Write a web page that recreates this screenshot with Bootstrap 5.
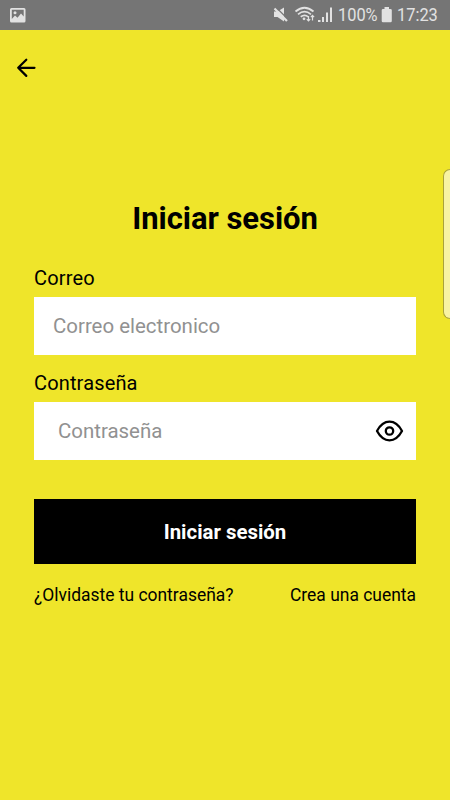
<!DOCTYPE html>
<html lang="es">
<head>
<meta charset="utf-8">
<meta name="viewport" content="width=device-width, initial-scale=1">
<title>Iniciar sesión</title>
<link href="https://cdn.jsdelivr.net/npm/bootstrap@5.3.0/dist/css/bootstrap.min.css" rel="stylesheet">
<style>
body{font-family:Roboto,"Liberation Sans",sans-serif;background:#efe52a;color:#000;height:800px;line-height:1}
svg{display:block;flex:none}
.status{height:30px;background:#757575;color:#e2e2e2;padding:0 12px 0 10px}
.status-text{font-size:18px;display:block;line-height:30px;white-space:nowrap;transform:scaleX(.91);transform-origin:left}
.slot-pct{width:39px;margin-left:5px}
.slot-time{width:41px;margin-left:4px}
.topbar{padding:25px 14px 0;height:76px}
.form-area{padding:0 34px}
.title{font-size:31px;font-weight:700;line-height:36px;margin:95px 0 29px;letter-spacing:-.05px}
.field-label{font-size:20px;line-height:24px;margin:0 0 7px;letter-spacing:.15px}
.field{height:58px;border:0;border-radius:0;background:#fff;font-size:20.45px;padding:0 19px;color:#000}
.field::placeholder{color:#919191;opacity:1}
.field-email{margin-bottom:16px}
.field-pass{padding-left:24px}
.eye{right:11px;top:14px}
.submit{height:65px;border-radius:0;font-size:20.4px;font-weight:700;margin-top:39px;background:#000;padding:2px 0 0}
.links{font-size:17.45px;line-height:22px;margin-top:20px}
.edge{right:0;top:169px;width:7px;height:150px;background:#f8f3a2;border:1px solid #aaa33c;border-right:0;border-radius:7px 0 0 7px}
</style>
<script src="https://cdn.jsdelivr.net/npm/bootstrap@5.3.0/dist/js/bootstrap.bundle.min.js"></script>
</head>
<body class="position-relative overflow-hidden">
<header class="status d-flex align-items-center">
  <svg width="16" height="15" viewBox="0 0 16 15"><path fill="#e2e2e2" fill-rule="evenodd" d="M1.5 0h12.500Q15.500 0 15.500 1.500v11.500Q15.500 14.500 14 14.500H1.500Q0 14.500 0 13V1.500Q0 0 1.500 0zM1.800 1.800v9.200l3.200-3.500 2.500 2.300 3.500-4.300 2.700 3V1.800z"/><circle cx="5" cy="4.700" r="1.500" fill="#e2e2e2"/></svg>
  <div class="d-flex align-items-center ms-auto">
    <svg width="60" height="20" viewBox="273 5 60 20" fill="none" stroke="#e2e2e2">
      <path fill="#e2e2e2" stroke="none" d="M274 11.500h3.500l6.500-4v14l-6.500-4.500h-3.500z"/>
      <path stroke="#757575" stroke-width="1.200" d="M276.200 7.500l12 12"/>
      <path stroke-width="2.200" d="M274.500 8.500l12.500 12.500"/>
      <path stroke-width="1.700" d="M295.500 11.500q9-7.500 18 0M298 14.300q6.500-5.300 13 0M300.700 16.800q4-3 7.500 0"/>
      <circle cx="304" cy="18.800" r="1.400" fill="#e2e2e2" stroke="none"/>
      <path stroke-width="1.200" d="M308.500 16v5M306.800 19.200l1.700 1.800 1.700-1.800M312.500 20.500v-5M310.900 17.200l1.600-1.800 1.600 1.800"/>
      <path fill="#e2e2e2" stroke="none" d="M318 22v-2h2.500v2zM322 22v-5h2v5zM326 22v-9.500h2V22zM330 22V7.500h2V22z"/>
    </svg>
    <div class="slot-pct"><span class="status-text">100%</span></div>
    <svg class="ms-1" width="12" height="16" viewBox="0 0 12 16"><path fill="#e2e2e2" d="M3.500 0h4.500v2h1.500q1.300 0 1.300 1.300V14q0 1.300-1.300 1.300H2Q.700 15.300.700 14V3.300Q.700 2 2 2h1.500z"/></svg>
    <div class="slot-time"><span class="status-text">17:23</span></div>
  </div>
</header>
<nav class="topbar">
  <a href="#" class="d-inline-block" aria-label="Volver"><svg width="24" height="24" viewBox="0 0 24 24" fill="none" stroke="#000" stroke-width="2.200" stroke-linecap="round" stroke-linejoin="round"><path d="M20.500 12.800H4.200M12.300 4.700l-8.100 8.100 8.100 8.100"/></svg></a>
</nav>
<main class="form-area">
  <h1 class="title text-center">Iniciar sesión</h1>
  <form>
    <label class="field-label d-block" for="correo">Correo</label>
    <input id="correo" type="email" class="form-control field field-email" placeholder="Correo electronico">
    <label class="field-label d-block" for="clave">Contraseña</label>
    <div class="position-relative">
      <input id="clave" type="password" class="form-control field field-pass" placeholder="Contraseña">
      <svg class="eye position-absolute" width="30" height="30" viewBox="0 0 30 30" fill="none" stroke="#000" stroke-width="2.300" stroke-linejoin="round"><path d="M2 15Q7 5.700 14.500 5.700T27 15Q22 24.300 14.500 24.300T2 15z"/><circle cx="14.500" cy="15" r="3.700"/></svg>
    </div>
    <button type="button" class="btn btn-dark border-0 w-100 submit">Iniciar sesión</button>
    <div class="links d-flex justify-content-between">
      <a href="#" class="text-black text-decoration-none text-nowrap">¿Olvidaste tu contraseña?</a>
      <a href="#" class="text-black text-decoration-none text-nowrap">Crea una cuenta</a>
    </div>
  </form>
</main>
<div class="edge position-absolute"></div>
</body>
</html>
